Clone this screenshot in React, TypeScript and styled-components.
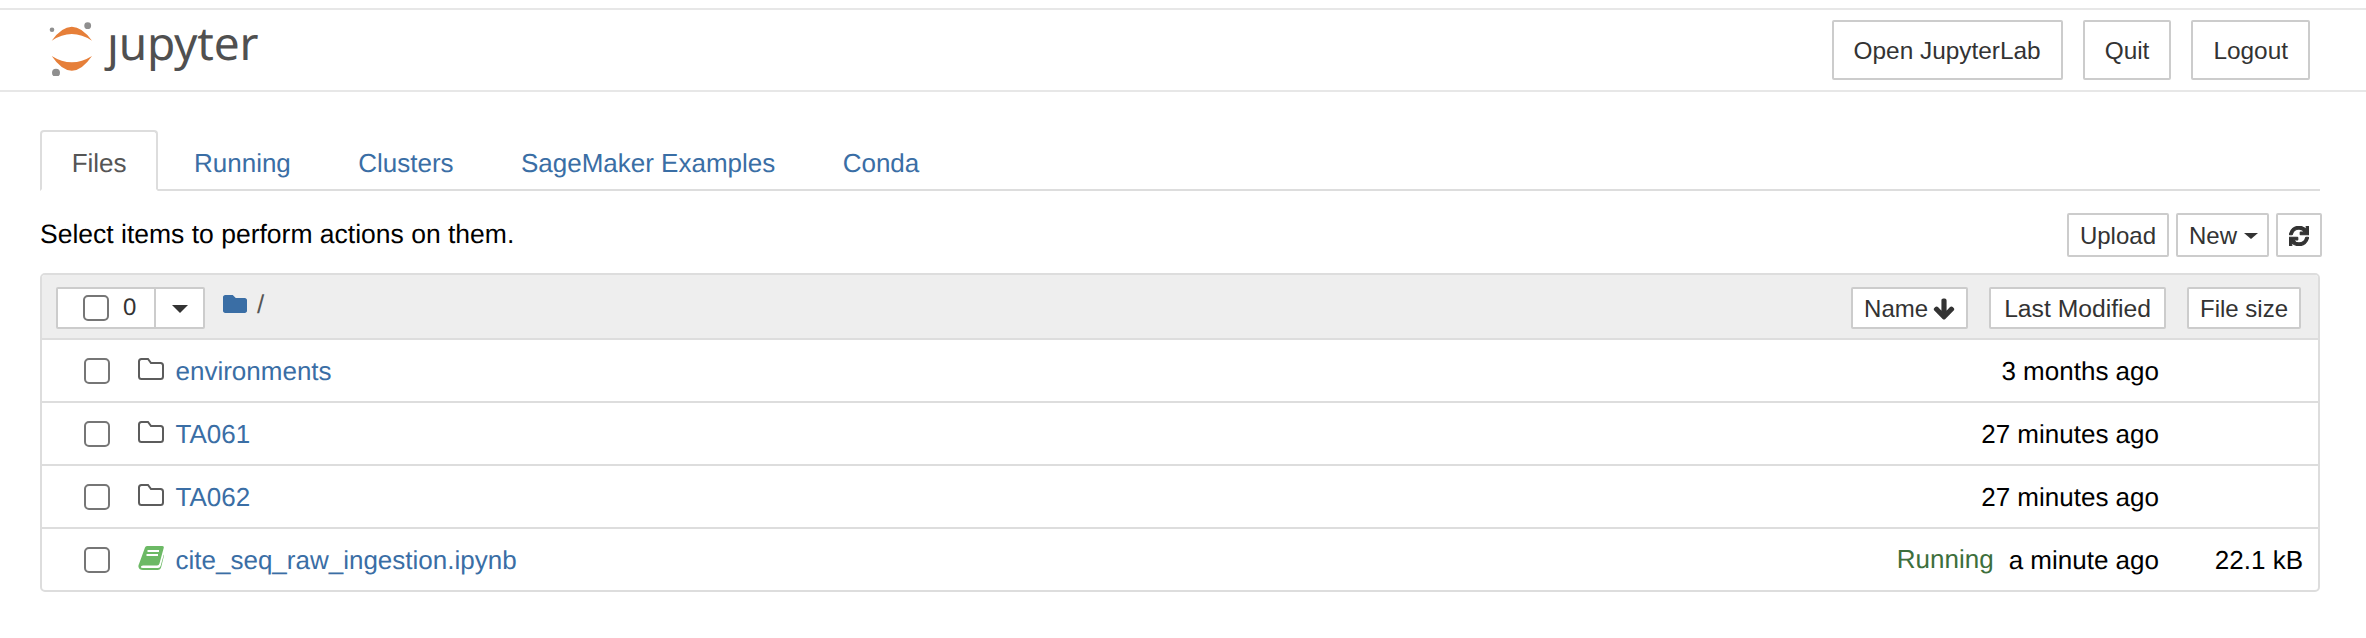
import { createGlobalStyle } from "styled-components";
import styled from "styled-components";
import { FaArrowDown, FaFolder, FaSync } from "react-icons/fa";

const GlobalStyle = createGlobalStyle`
	html, body {
		margin: 0;
		padding: 0;
		background: #fff;
		color: #000;
		font-family: "Liberation Sans", Arial, sans-serif;
		font-size: 26px;
		text-rendering: geometricPrecision;
	}
`;

const Page = styled.div`
	padding-top: 8px;
`;

const Header = styled.header`
	display: flex;
	justify-content: space-between;
	height: 80px;
	padding: 0 56px 0 48px;
	border-top: 2px solid #e7e7e7;
	border-bottom: 2px solid #e7e7e7;
`;

const Logo = styled.a`
	display: flex;
	align-items: flex-start;
	padding-top: 10px;
	gap: 11px;
`;

const WordMark = styled.span`
	margin-top: -10px;
	font-family: "Noto Sans", sans-serif;
	font-size: 46px;
	line-height: 66px;
	letter-spacing: -0.2px;
	color: #505050;
`;

const DotlessJ = styled.span`
	display: inline-block;
	clip-path: inset(24px -10px -10px -10px);
`;

const HeaderButtons = styled.div`
	display: flex;
	align-items: center;
	gap: 20px;
`;

const Button = styled.button<{ $tall?: boolean }>`
	display: inline-flex;
	align-items: center;
	justify-content: center;
	box-sizing: border-box;
	height: ${({ $tall }) => ($tall ? "60px" : "44px")};
	padding: ${({ $tall }) => ($tall ? "2px 20px 0" : "2px 11px 0")};
	border: 2px solid #ccc;
	border-radius: 2px;
	background: #fff;
	color: #333;
	font-family: inherit;
	font-size: ${({ $tall }) => ($tall ? "24.4px" : "24px")};
	white-space: nowrap;
`;

const WideSortButton = styled(Button)`
	padding: 2px 13px 0;
	font-size: 24.7px;
`;

const Main = styled.main`
	padding: 38px 46px 0 40px;
`;

const Tabs = styled.nav`
	display: flex;
	gap: 4px;
	height: 61px;
	box-sizing: border-box;
	border-bottom: 2px solid #ddd;
`;

const Tab = styled.a<{ $active?: boolean }>`
	box-sizing: border-box;
	height: ${({ $active }) => ($active ? "61px" : "59px")};
	padding: 0 29.7px;
	border: 2px solid ${({ $active }) => ($active ? "#ddd" : "transparent")};
	border-bottom-color: ${({ $active }) => ($active ? "#fff" : "transparent")};
	border-radius: 4px 4px 0 0;
	background: ${({ $active }) => ($active ? "#fff" : "transparent")};
	color: ${({ $active }) => ($active ? "#555" : "#3a6ea5")};
	font-size: 26px;
	line-height: 62px;
`;

const Toolbar = styled.div`
	display: flex;
	align-items: center;
	justify-content: space-between;
	height: 44px;
	margin: 22px -2px 16px 0;
`;

const Hint = styled.span`
	margin-top: -2px;
	font-size: 26.5px;
`;

const ToolButtons = styled.div`
	display: flex;
	gap: 7px;
`;

const Caret = styled.span<{ $big?: boolean }>`
	display: inline-block;
	margin: ${({ $big }) => ($big ? "0" : "0 -2px 0 7px")};
	border-top: ${({ $big }) => ($big ? "8px" : "6px")} solid #333;
	border-left: ${({ $big }) => ($big ? "8px" : "7px")} solid transparent;
	border-right: ${({ $big }) => ($big ? "8px" : "7px")} solid transparent;
`;

const Panel = styled.section`
	box-sizing: border-box;
	border: 2px solid #ddd;
	border-radius: 5px;
	overflow: hidden;
`;

const PanelHeader = styled.div`
	display: flex;
	align-items: flex-start;
	justify-content: space-between;
	box-sizing: border-box;
	height: 65px;
	padding: 12px 17px 0 14px;
	border-bottom: 2px solid #ddd;
	background: #eee;
`;

const HeaderLeft = styled.div`
	display: flex;
	align-items: center;
`;

const SelectGroup = styled.div`
	display: flex;
	box-sizing: border-box;
	width: 149px;
	height: 42px;
	border: 2px solid #ccc;
	border-radius: 2px;
	background: #fff;
`;

const SelectCount = styled.label`
	display: flex;
	align-items: center;
	gap: 14px;
	box-sizing: border-box;
	width: 98px;
	padding-left: 25px;
	border-right: 2px solid #ccc;
	color: #333;
	font-size: 24px;
`;

const SelectCaret = styled.span`
	display: flex;
	flex: 1;
	align-items: center;
	justify-content: center;
	padding-top: 2px;
`;

const Checkbox = styled.input.attrs({ type: "checkbox" })`
	appearance: none;
	box-sizing: border-box;
	flex: none;
	width: 26px;
	height: 26px;
	margin: 0;
	border: 2px solid #767676;
	border-radius: 5px;
	background: #fff;
`;

const Crumb = styled.span`
	display: flex;
	align-items: center;
	gap: 10px;
	margin: -8px 0 0 18px;
	color: #555;
	font-size: 26px;
	svg {
		color: #3a6ea5;
		font-size: 24px;
	}
`;

const SortButtons = styled.div`
	display: flex;
	gap: 21px;
	button {
		height: 42px;
	}
	svg {
		margin-left: 5px;
		font-size: 22px;
		stroke: currentColor;
		stroke-width: 40;
	}
`;

const Row = styled.div`
	display: flex;
	align-items: center;
	box-sizing: border-box;
	height: 63px;
	padding: 2px 15px 0 42px;
	border-bottom: 2px solid #ddd;
	&:last-child {
		height: 61px;
		border-bottom: none;
	}
`;

const ItemIcon = styled.span`
	display: flex;
	flex: none;
	width: 37.5px;
	margin: -6px 0 0 28px;
`;

const ItemName = styled.a`
	flex: 1;
	color: #3a6ea5;
`;

const Status = styled.span`
	margin-right: 15px;
	margin-top: -3px;
	color: #3d6f3c;
`;

const Modified = styled.span``;

const Size = styled.span`
	width: 144px;
	text-align: right;
`;

const SyncIcon = styled(FaSync)`
	stroke: currentColor;
	stroke-width: 30;
`;

const RowCheckbox = styled(Checkbox)`
	margin-top: -2px;
`;

const LogoMark = () => (
	<svg width="48" height="56" viewBox="0 0 48 56">
		<path d="M3.700 20.700Q23.800 -7.300 44 20.700Q23.800 7.300 3.700 20.700Z" fill="#e67f39" />
		<path d="M3.700 36Q23.800 65.400 44 36Q23.800 48.600 3.700 36Z" fill="#e67f39" />
		<circle cx="39.700" cy="5.700" r="3.400" fill="#8f8f8f" />
		<circle cx="4" cy="9.700" r="2.300" fill="#8f8f8f" />
		<circle cx="8" cy="52.700" r="4" fill="#8f8f8f" />
	</svg>
);

const FolderIcon = () => (
	<svg width="26" height="22" viewBox="0 0 26 22" fill="none">
		<path
			d="M1 18.500V3.500Q1 1 3.500 1H10L13 5H22.500Q25 5 25 7.500V18.500Q25 21 22.500 21H3.500Q1 21 1 18.500Z"
			stroke="#5c5c5c"
			strokeWidth="2"
		/>
	</svg>
);

const NotebookIcon = () => (
	<svg width="26" height="24" viewBox="0 0 26 24">
		<path
			d="M7 1.500Q7.500 0 9 0H24Q26.300 0 25.700 2L21.500 17.500Q21 19.500 19 19.500H5Q3 19.500 2.800 21Q2.800 22 5 22H20Q22 22 22.600 20L25.800 8.500L26 9.500L23.200 21Q22.500 24 19.500 24H5Q1 24 0.500 21Q0.200 19.500 1 18Z"
			fill="#6cb965"
		/>
		<path d="M9.500 5H21M8.500 9H20" stroke="#fff" strokeWidth="2" />
	</svg>
);

const items = [
	{ name: "environments", modified: "3 months ago" },
	{ name: "TA061", modified: "27 minutes ago" },
	{ name: "TA062", modified: "27 minutes ago" },
	{
		name: "cite_seq_raw_ingestion.ipynb",
		modified: "a minute ago",
		notebook: true,
		running: true,
		size: "22.1 kB",
	},
];

export default function App() {
	return (
		<Page>
			<GlobalStyle />
			<Header>
				<Logo>
					<LogoMark />
					<WordMark>
						<DotlessJ>j</DotlessJ>upyter
					</WordMark>
				</Logo>
				<HeaderButtons>
					<Button $tall>Open JupyterLab</Button>
					<Button $tall>Quit</Button>
					<Button $tall>Logout</Button>
				</HeaderButtons>
			</Header>
			<Main>
				<Tabs>
					<Tab $active>Files</Tab>
					<Tab>Running</Tab>
					<Tab>Clusters</Tab>
					<Tab>SageMaker Examples</Tab>
					<Tab>Conda</Tab>
				</Tabs>
				<Toolbar>
					<Hint>Select items to perform actions on them.</Hint>
					<ToolButtons>
						<Button>Upload</Button>
						<Button>
							New
							<Caret />
						</Button>
						<Button>
							<SyncIcon size={20} />
						</Button>
					</ToolButtons>
				</Toolbar>
				<Panel>
					<PanelHeader>
						<HeaderLeft>
							<SelectGroup>
								<SelectCount>
									<Checkbox />0
								</SelectCount>
								<SelectCaret>
									<Caret $big />
								</SelectCaret>
							</SelectGroup>
							<Crumb>
								<FaFolder />/
							</Crumb>
						</HeaderLeft>
						<SortButtons>
							<Button>
								Name
								<FaArrowDown />
							</Button>
							<WideSortButton>Last Modified</WideSortButton>
							<Button>File size</Button>
						</SortButtons>
					</PanelHeader>
					{items.map((el) => (
						<Row key={el.name}>
							<RowCheckbox />
							<ItemIcon>{el.notebook ? <NotebookIcon /> : <FolderIcon />}</ItemIcon>
							<ItemName>{el.name}</ItemName>
							{el.running && <Status>Running</Status>}
							<Modified>{el.modified}</Modified>
							<Size>{el.size}</Size>
						</Row>
					))}
				</Panel>
			</Main>
		</Page>
	);
}
